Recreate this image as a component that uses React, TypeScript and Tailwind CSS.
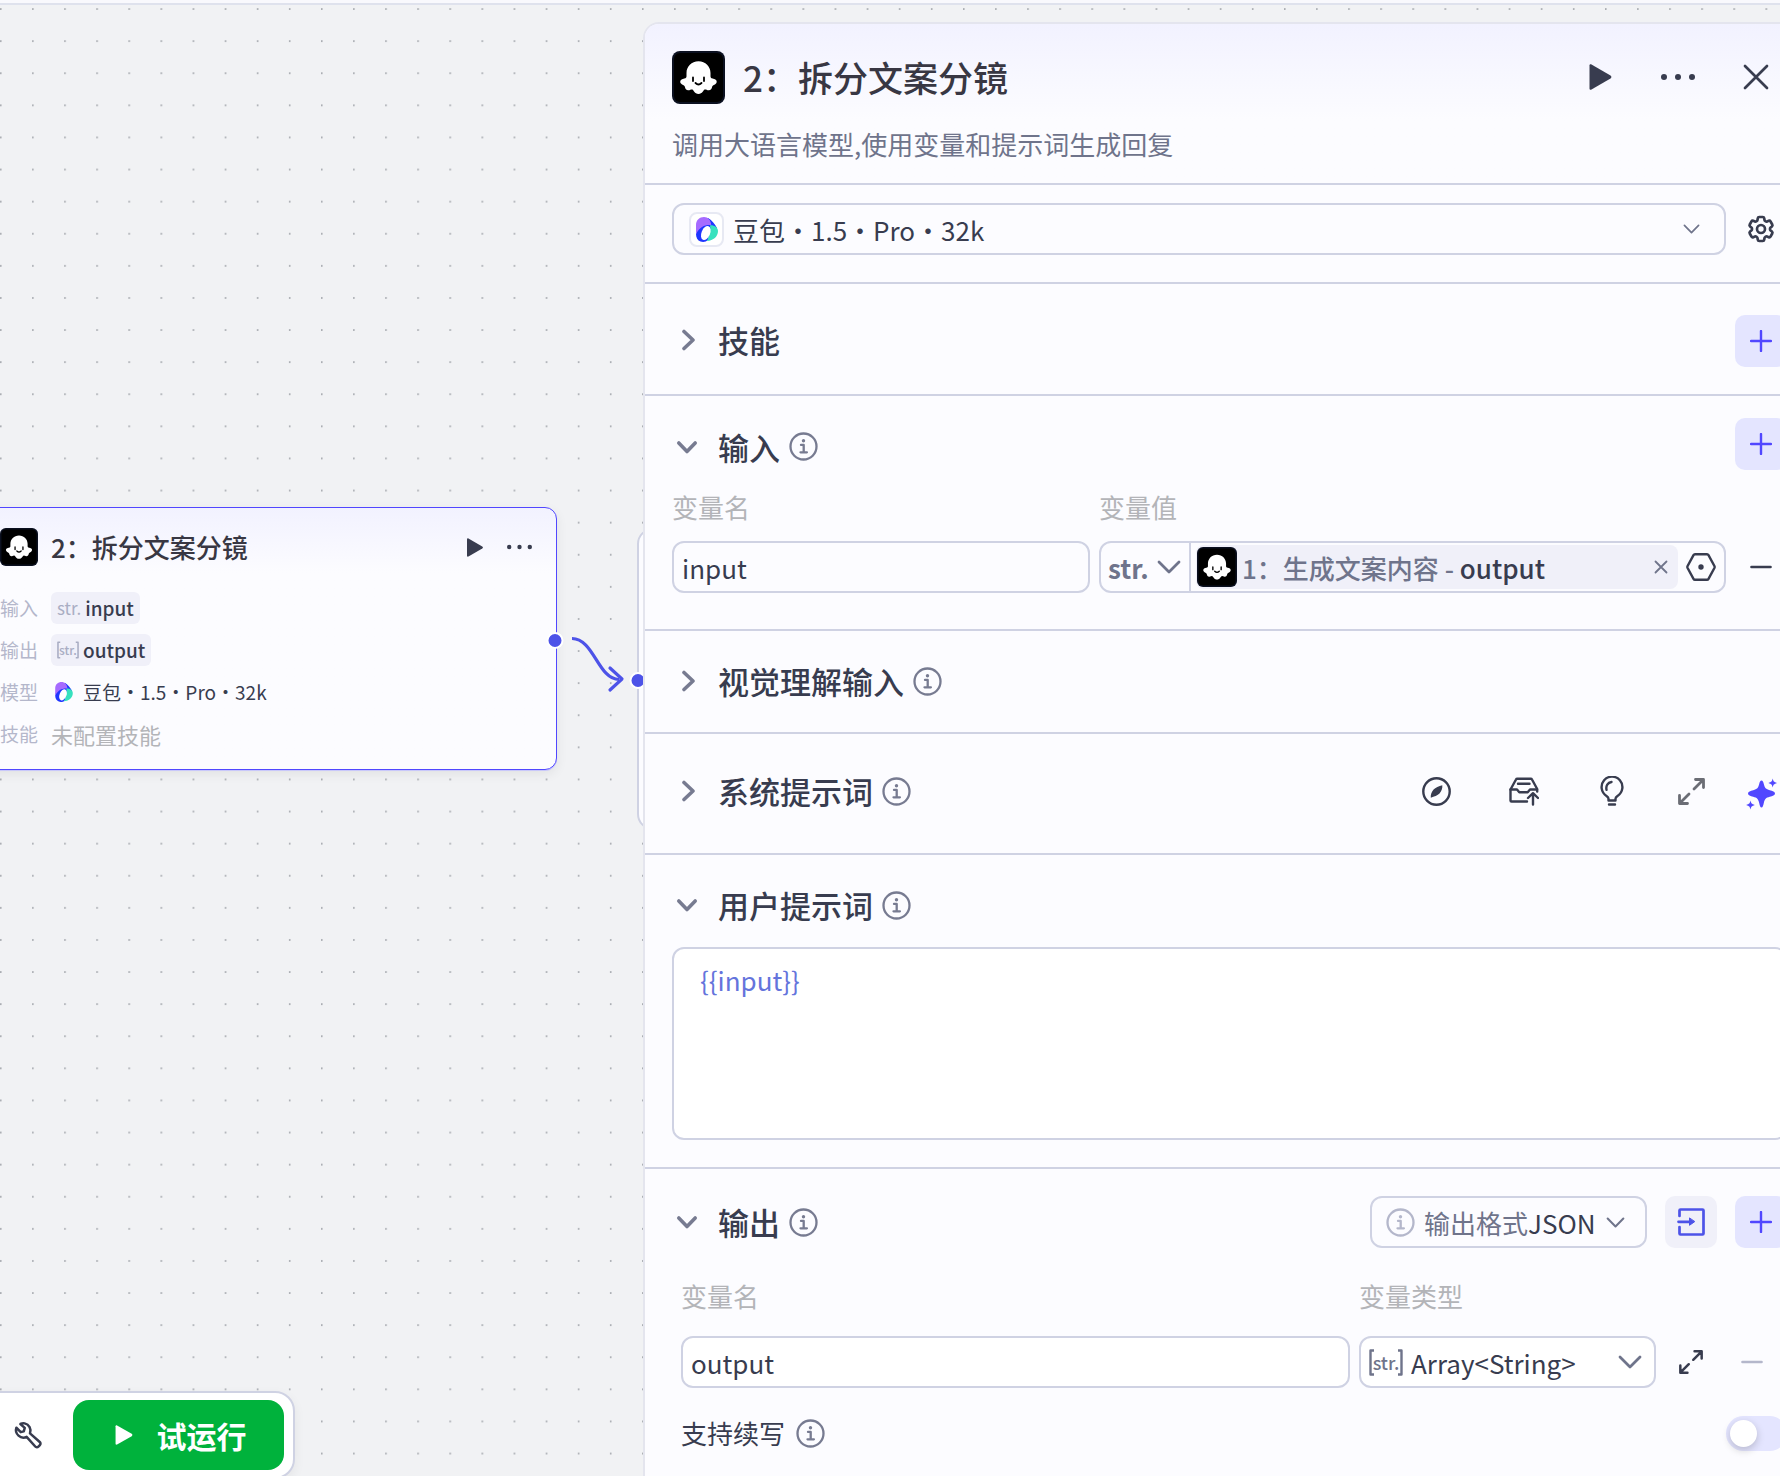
import { useState } from "react";
import type { ReactNode } from "react";
import { HiOutlineCog6Tooth } from "react-icons/hi2";
import { clsx } from "clsx";

type IconProps = { className?: string };

function GhostIcon({ className }: IconProps) {
  return (
    <svg viewBox="0 0 53 53" className={className} aria-hidden="true">
      <rect width="53" height="53" rx="8" fill="#0b1020" />
      <rect x="2" y="2" width="49" height="49" rx="6" fill="#000" />
      <path
        fill="#fff"
        d="M26.5 10.3c-7 0-12 5.2-12 11.7v3.6c0 1.8-1.6 2-3.6 2.3-2.6.4-3.3 3-1.9 4.7 1.2 1.5 3.4 1.7 3.9 3.2.3 2.3 1.5 3.7 3.7 3.5 1.5-.1 2.6-1.1 3.7-.7 1.6.6 2.2 4.4 6.200 4.400s4.600-3.800 6.200-4.400c1.100-.4 2.200.6 3.700.7 2.200.2 3.400-1.200 3.700-3.500.5-1.500 2.700-1.700 3.900-3.200 1.400-1.700.7-4.300-1.900-4.700-2-.3-3.600-.5-3.600-2.300V22c0-6.500-5-11.700-12-11.700z"
      />
      <path d="M21 26.5v3.500M32 26.5v3.500M23.500 32q3 3 6 0" fill="none" stroke="#000" strokeWidth="1.8" strokeLinecap="round" />
    </svg>
  );
}

function DoubaoIcon({ className }: IconProps) {
  return (
    <svg viewBox="0 0 22 25" className={className} aria-hidden="true">
      <path fill="#1f36ff" d="M12 1C15.500 3 19 7 21 11L14 14 12 23C10 25 7 25.500 4.500 24.500 1.500 23.500 0 20.500 0 17L2 9z" />
      <path fill="#a66bff" d="M0 17V8C0 3 3.500 0 8 0c4 0 6.800 3 7.300 8.200C9.500 7.500 4 9.500 0 17z" />
      <path fill="#37e1be" d="M14 8.300C18.500 8 22 10.500 22 14c0 5.500-4.500 9.500-11 10C13 20 15 14 14 8.300z" />
      <ellipse cx="9.800" cy="16" rx="4.300" ry="7.300" transform="rotate(22 9.800 16)" fill="#fff" />
    </svg>
  );
}

function PlayIcon({ className }: IconProps) {
  return (
    <svg viewBox="0 0 22 26" className={className} fill="currentColor" aria-hidden="true">
      <path d="M0 1.5C0 .4 1 0 2 .5l19 11c1.200.8 1.200 2.200 0 3l-19 11c-1 .5-2 .1-2-1z" />
    </svg>
  );
}

function MoreIcon({ className }: IconProps) {
  return (
    <svg viewBox="0 0 34 8" className={className} fill="currentColor" aria-hidden="true">
      <circle cx="3" cy="4" r="3" />
      <circle cx="17" cy="4" r="3" />
      <circle cx="31" cy="4" r="3" />
    </svg>
  );
}

function InfoIcon({ className }: IconProps) {
  return (
    <svg viewBox="0 0 29 29" className={clsx("size-[29px] shrink-0", className)} fill="none" stroke="currentColor" strokeWidth="2.3" aria-hidden="true">
      <circle cx="14.5" cy="14.5" r="13" />
      <circle cx="14.5" cy="8.7" r="1.7" fill="currentColor" stroke="none" />
      <path d="M12 12.900h2.700v7.300M11.500 20.300h6.400" strokeLinecap="round" strokeLinejoin="round" />
    </svg>
  );
}

function ChevronIcon({ className, strokeWidth = 2 }: IconProps & { strokeWidth?: number }) {
  return (
    <svg viewBox="0 0 24 14" className={clsx("pointer-events-none shrink-0", className)} fill="none" stroke="currentColor" strokeWidth={strokeWidth} strokeLinecap="round" strokeLinejoin="round" aria-hidden="true">
      <path d="M2 2l10 10L22 2" />
    </svg>
  );
}

// thicker chevron used by the section headers
function ToggleIcon({ open }: { open: boolean }) {
  return (
    <svg viewBox="0 0 22 22" className="size-[22px]" fill="none" stroke="currentColor" strokeWidth="3.600" strokeLinecap="round" strokeLinejoin="round" aria-hidden="true">
      {open ? <path d="M2.800 7l8.200 8.500L19.200 7" /> : <path d="M8 2.500l9 8.500-9 8.500" />}
    </svg>
  );
}

function ExpandIcon({ className }: IconProps) {
  return (
    <svg viewBox="0 0 27 27" className={className} fill="none" stroke="currentColor" strokeWidth="2.8" strokeLinecap="round" strokeLinejoin="round" aria-hidden="true">
      <path d="M17.500 1.500h8v8M25 2l-9 9M1.500 17.500v8h8M2 25l9-9" />
    </svg>
  );
}

function PlusIcon() {
  return (
    <svg viewBox="0 0 22 22" className="size-[22px]" stroke="currentColor" strokeWidth="2.4" strokeLinecap="round" aria-hidden="true">
      <path d="M11 1v20M1 11h20" />
    </svg>
  );
}

function MinusIcon() {
  return (
    <svg viewBox="0 0 22 4" className="h-1 w-[22px]" stroke="currentColor" strokeWidth="2.6" strokeLinecap="round" aria-hidden="true">
      <path d="M1.500 2h19" />
    </svg>
  );
}

function CompassIcon() {
  return (
    <svg viewBox="0 0 29 29" className="size-[29px]" aria-hidden="true">
      <circle cx="14.5" cy="14.5" r="13.200" fill="none" stroke="currentColor" strokeWidth="2.400" />
      <path fill="currentColor" d="M20.300 8.300c.4 2.600-1 6.500-2.800 8.200-1.800 1.800-5.300 3.200-8.700 4.200-.4-2.600 1-6.500 2.800-8.200 1.800-1.800 5.300-3.200 8.700-4.200z" />
    </svg>
  );
}

function InboxUpIcon() {
  return (
    <svg viewBox="0 0 30 29" className="h-[29px] w-[30px]" fill="none" stroke="currentColor" strokeWidth="2.400" strokeLinecap="round" strokeLinejoin="round" aria-hidden="true">
      <path d="M18 24.500H2.500a1 1 0 0 1-1-1V12.500L7 2.500Q7.400 1.700 8.300 1.700h13.400q.9 0 1.300.8l5.200 9.500v2.500" />
      <path d="M9 6.800h11.500M1.500 12.500H8l2.300 2.800h8.400l2.300-2.800h7M24 27.500V17M19 21l5-4.800 5 4.800" />
    </svg>
  );
}

function BulbIcon() {
  return (
    <svg viewBox="0 0 24 30" className="h-[30px] w-6" fill="none" stroke="currentColor" strokeWidth="2.400" strokeLinecap="round" strokeLinejoin="round" aria-hidden="true">
      <path d="M8.500 24.500h7v-1.800c0-1.300.7-1.900 2-2.800a10.400 10.400 0 1 0-11 0c1.300.9 2 1.500 2 2.800zM9 28.500h6M6.500 13.800c-.8-4 1.200-7.300 5-7.800" />
    </svg>
  );
}

function SparklesIcon() {
  return (
    <svg viewBox="-2 -6 34 38" className="h-[38px] w-[34px]" fill="currentColor" aria-hidden="true">
      <path d="M15.500 2.500c1.200 0 1.800 1.300 2.300 3.500 1 4 2 5.200 6 6.200 2.700.7 5.200 1.400 5.200 3.300s-2.500 2.600-5.200 3.300c-4 1-5 2.200-6 6.200-.5 2.700-1.100 4.500-2.300 4.500s-1.800-1.800-2.300-4.500c-1-4-2-5.200-6-6.200-2.700-.7-5.200-1.400-5.200-3.300s2.500-2.600 5.200-3.300c4-1 5-2.200 6-6.200.5-2.200 1.100-3.500 2.300-3.500z" />
      <path d="M26.700.5c.8 3 1 3.300 4.300 4.500-3.300 1.200-3.500 1.500-4.300 4.500-.8-3-1-3.300-4.300-4.500 3.300-1.200 3.500-1.500 4.300-4.500zM4.500 22.500c.8 3 1 3.300 4.300 4.500-3.300 1.200-3.500 1.500-4.300 4.500-.8-3-1-3.300-4.300-4.500 3.300-1.200 3.500-1.500 4.300-4.500z" />
    </svg>
  );
}

function ImportIcon() {
  return (
    <svg viewBox="0 0 28 28" className="size-7" fill="none" stroke="currentColor" strokeWidth="2.700" strokeLinecap="round" strokeLinejoin="round" aria-hidden="true">
      <path d="M2.500 8V2.500a1 1 0 0 1 1-1h22a1 1 0 0 1 1 1v23a1 1 0 0 1-1 1h-22a1 1 0 0 1-1-1V19M1.500 13.800H15" />
      <path d="M12.500 10.300v7l5-3.500z" fill="currentColor" strokeWidth="1" />
    </svg>
  );
}

function WrenchIcon() {
  return (
    <svg viewBox="0 0 24 24" className="size-[30px]" fill="none" stroke="currentColor" strokeWidth="2" strokeLinecap="round" strokeLinejoin="round" aria-hidden="true">
      <path d="M9.300 2.700a6 6 0 0 1 4.300 8l7.800 6.900a1.700 1.700 0 0 1 .1 2.500l-1.200 1.200a1.700 1.700 0 0 1-2.500-.1l-6.900-7.700A6 6 0 0 1 2.700 6.200l3.500 3.500 2.400-.6.8-2.800-3.500-3.100a6 6 0 0 1 3.400-.5z" />
    </svg>
  );
}

function VariableIcon() {
  return (
    <svg viewBox="0 0 30 28" className="h-7 w-[30px]" fill="none" stroke="currentColor" strokeWidth="2.400" strokeLinejoin="round" aria-hidden="true">
      <path d="M9 1.200h12q1 0 1.500.9l5.900 10.900q.5 1 0 2l-5.900 10.900q-.5.9-1.500.9H9q-1 0-1.500-.9L1.600 15q-.5-1 0-2L7.500 2.100q.5-.9 1.500-.9z" />
      <circle cx="15" cy="14" r="2.700" fill="currentColor" stroke="none" />
    </svg>
  );
}

// "str." wrapped in tall brackets, marks an array type
function ArrayTypeMark({ className }: IconProps) {
  return (
    <span className={clsx("relative flex shrink-0 items-center justify-center font-medium", className)}>
      str.
      <svg viewBox="0 0 34 27" className="absolute inset-0 size-full" fill="none" stroke="currentColor" strokeWidth="2.400" strokeLinejoin="round" aria-hidden="true">
        <path d="M5 1.500H1.500v24H5M29 1.500h3.500v24H29" />
      </svg>
    </span>
  );
}

type IconButtonProps = {
  label: string;
  className?: string;
  children: ReactNode;
};

function IconButton({ label, className, children }: IconButtonProps) {
  return (
    <button type="button" aria-label={label} className={clsx("flex h-[52px] shrink-0 items-center justify-center rounded-[10px]", className)}>
      {children}
    </button>
  );
}

function AddButton({ label }: { label: string }) {
  return (
    <IconButton label={label} className="w-[52px] self-start bg-[#e4e5ff] text-[#5147ff]">
      <PlusIcon />
    </IconButton>
  );
}

type SectionProps = {
  title: string;
  className: string;
  headerClassName?: string;
  defaultOpen?: boolean;
  info?: boolean;
  actions?: ReactNode;
  children?: ReactNode;
};

function Section({ title, className, headerClassName = "h-[52px]", defaultOpen = false, info = true, actions, children }: SectionProps) {
  const [open, setOpen] = useState(defaultOpen);

  return (
    <section className={clsx("border-b-2 border-[#cfd2e3] px-[27px]", className)}>
      <div className={clsx("flex items-center justify-between", headerClassName)}>
        <div className="flex items-center gap-[9px]">
          <button type="button" aria-expanded={open} onClick={() => setOpen(!open)} className="flex items-center">
            <span className="flex w-[46px] items-center pl-1 text-[#777b91]">
              <ToggleIcon open={open} />
            </span>
            <span className="text-[31px] leading-10 font-medium text-[#383c4f]">{title}</span>
          </button>
          {info && <InfoIcon className="text-[#777b91]" />}
        </div>
        {actions}
      </div>
      {open && children}
    </section>
  );
}

const fieldClass = "h-[52px] min-w-0 rounded-xl border-2 border-[#cfd2e3] text-[26px] text-[#383c4f] outline-none";

function NodeRow({ label, children }: { label: string; children: ReactNode }) {
  return (
    <div className="flex h-8 items-center gap-[13px]">
      <dt className="w-[38px] text-[19px] text-[#b4b7cb]">{label}</dt>
      <dd className="flex items-center">{children}</dd>
    </div>
  );
}

function Chip({ type, name }: { type: ReactNode; name: string }) {
  return (
    <span className="flex h-8 items-center gap-1 rounded-md bg-[#f0f0f9] px-[6px]">
      <span className="text-[17px] text-[#a9adc3]">{type}</span>
      <span className="text-[19px] font-medium text-[#383c4f]">{name}</span>
    </span>
  );
}

function WorkflowNode() {
  return (
    <article className="absolute top-[502px] -left-5 flex h-[263px] w-[577px] flex-col rounded-xl border border-[#5147ff] bg-[#fcfcff] bg-gradient-to-b from-[#f2f2ff] to-[#fcfcff] to-25% pt-5 pr-6 pl-[19px] shadow-[0_1px_0_#c9c8fa,0_4px_12px_rgba(0,0,0,0.07)]">
      <header className="flex items-center text-[#383c4f]">
        <GhostIcon className="size-[38px]" />
        <h2 className="ml-[13px] flex-1 text-[26px] leading-[38px] font-medium text-[#383743]">2：拆分文案分镜</h2>
        <button type="button" aria-label="运行节点">
          <PlayIcon className="h-[19px] w-4" />
        </button>
        <button type="button" aria-label="更多操作" className="ml-6">
          <MoreIcon className="h-[6px] w-[25px]" />
        </button>
      </header>
      <dl className="mt-[26px] flex flex-col gap-[10px]">
        <NodeRow label="输入">
          <Chip type="str." name="input" />
        </NodeRow>
        <NodeRow label="输出">
          <Chip type={<ArrayTypeMark className="h-[18px] w-[22px] text-[12px]" />} name="output" />
        </NodeRow>
        <NodeRow label="模型">
          <DoubaoIcon className="mx-1 h-5 w-[18px]" />
          <span className="ml-[6px] text-[19px] text-[#383c4f]">豆包・1.5・Pro・32k</span>
        </NodeRow>
        <NodeRow label="技能">
          <span className="text-[22px] text-[#b3b4b8]">未配置技能</span>
        </NodeRow>
      </dl>
    </article>
  );
}

function Canvas() {
  return (
    <div className="absolute inset-0 overflow-hidden">
      <svg className="absolute inset-0 size-full" aria-hidden="true">
        <defs>
          <pattern id="dots" width="20" height="20" patternUnits="userSpaceOnUse" patternTransform="translate(0 -12.500) scale(1.605)">
            <circle cx="0.500" cy="10.300" r="0.600" fill="#a6a9af" />
          </pattern>
        </defs>
        <rect width="100%" height="100%" fill="url(#dots)" />
      </svg>
      <WorkflowNode />
      <article className="absolute top-[523px] left-[637px] h-[302px] w-[400px] rounded-2xl border-2 border-[#cfd2e3] bg-[#fcfcff]" />
      <svg className="absolute top-[615px] left-[540px] h-[90px] w-[110px]" fill="none" aria-hidden="true">
        <path d="M32 18.500c22 0 26 41 47 41" stroke="#4d53e8" strokeWidth="3.200" />
        <path d="M70 48l12 11-12 11" stroke="#4d53e8" strokeWidth="3.200" strokeLinecap="round" strokeLinejoin="round" />
        <circle cx="15" cy="20.500" r="7.500" fill="#4d53e8" stroke="#fff" strokeWidth="2" />
        <circle cx="98" cy="60.500" r="7.500" fill="#4d53e8" stroke="#fff" strokeWidth="2" />
      </svg>
      <div className="absolute -bottom-[3px] -left-5 flex items-center rounded-[20px] border-2 border-[#cfd2e3] bg-white py-[7px] pr-[9px] pl-[31px] shadow-[0_4px_12px_rgba(0,0,0,0.06)]">
        <button type="button" aria-label="调试工具" className="text-[#383c4f]">
          <WrenchIcon />
        </button>
        <button type="button" className="ml-[30px] flex h-[70px] w-[211px] items-center justify-center gap-6 rounded-2xl bg-[#00b23c] pl-1 text-white">
          <PlayIcon className="h-5 w-[18px]" />
          <span className="text-[30px] font-bold">试运行</span>
        </button>
      </div>
    </div>
  );
}

function ModelSection() {
  return (
    <div className="flex gap-[9px] border-b-2 border-[#cfd2e3] px-[27px] pt-[18px] pb-[27px]">
      <div className={clsx(fieldClass, "flex flex-1 items-center pr-6 pl-[15px]")}>
        <span className="flex size-[35px] shrink-0 items-center justify-center rounded-lg border-2 border-[#e7e9f3] bg-white">
          <DoubaoIcon className="h-[25px] w-[22px]" />
        </span>
        <select aria-label="模型" className="ml-[9px] min-w-0 flex-1 appearance-none bg-transparent outline-none">
          <option>豆包・1.5・Pro・32k</option>
        </select>
        <ChevronIcon className="h-[10px] w-[17px] text-[#6f748b]" strokeWidth={2.4} />
      </div>
      <IconButton label="模型设置" className="w-[52px] text-[#383c4f]">
        <HiOutlineCog6Tooth className="size-8" strokeWidth={2} />
      </IconButton>
    </div>
  );
}

function InputSection() {
  return (
    <Section title="输入" defaultOpen className="pt-[22px] pb-9" headerClassName="h-[57px]" actions={<AddButton label="新增输入" />}>
      <div className="mt-3 grid grid-cols-[2fr_3fr_52px] gap-x-[9px] gap-y-[14px]">
        <label htmlFor="input-name" className="text-[26px] leading-10 text-[#b3b4b8]">变量名</label>
        <span className="col-span-2 text-[26px] leading-10 text-[#b3b4b8]">变量值</span>
        <input id="input-name" defaultValue="input" className={clsx(fieldClass, "px-2")} />
        <div className={clsx(fieldClass, "flex items-center")}>
          <div className="flex h-full w-[90px] shrink-0 items-center justify-between border-r-2 border-[#cfd2e3] pr-2 pl-[7px] text-[#6f748b]">
            <select aria-label="变量值类型" className="w-[42px] appearance-none bg-transparent font-bold outline-none">
              <option>str.</option>
            </select>
            <ChevronIcon className="h-[14px] w-6" strokeWidth={2.8} />
          </div>
          <div className="ml-[5px] flex h-11 min-w-0 flex-1 items-center rounded-lg bg-[#f0f0f9] pr-[10px] pl-px">
            <GhostIcon className="size-10 shrink-0" />
            <span className="ml-[5px] flex-1 truncate font-medium">
              <span className="text-[#6f748b]">1：生成文案内容 - </span>output
            </span>
            <button type="button" aria-label="清除引用" className="text-[#6f748b]">
              <svg viewBox="0 0 14 14" className="size-[14px]" stroke="currentColor" strokeWidth="1.800" strokeLinecap="round" aria-hidden="true">
                <path d="M1.500 1.500l11 11M12.500 1.500l-11 11" />
              </svg>
            </button>
          </div>
          <button type="button" aria-label="选择变量" className="mx-2">
            <VariableIcon />
          </button>
        </div>
        <IconButton label="删除输入" className="text-[#383c4f]">
          <MinusIcon />
        </IconButton>
      </div>
    </Section>
  );
}

function OutputSection() {
  return (
    <Section
      title="输出"
      defaultOpen
      className="pt-[27px]"
      actions={
        <div className="flex gap-[18px]">
          <div className={clsx(fieldClass, "flex w-[277px] items-center pr-5 pl-[14px]")}>
            <InfoIcon className="text-[#b4b7cb]" />
            <label htmlFor="format" className="ml-[9px] shrink-0 text-[#6f748b]">输出格式</label>
            <select id="format" className="min-w-0 flex-1 appearance-none bg-transparent outline-none">
              <option>JSON</option>
            </select>
            <ChevronIcon className="h-[11px] w-[19px] text-[#6f748b]" strokeWidth={2.6} />
          </div>
          <IconButton label="导入" className="w-[52px] bg-[#f0f0f9] text-[#4d53e8]">
            <ImportIcon />
          </IconButton>
          <AddButton label="新增输出" />
        </div>
      }
    >
      <div className="mt-7 grid grid-cols-[1fr_297px_52px_52px] gap-x-[9px] gap-y-5 px-[9px]">
        <label htmlFor="output-name" className="text-[26px] leading-10 text-[#b3b4b8]">变量名</label>
        <label htmlFor="output-type" className="col-span-3 text-[26px] leading-10 text-[#b3b4b8]">变量类型</label>
        <input id="output-name" defaultValue="output" className={clsx(fieldClass, "bg-white px-2")} />
        <div className={clsx(fieldClass, "flex items-center bg-white pr-3 pl-2")}>
          <ArrayTypeMark className="h-[27px] w-[34px] text-[18px] text-[#6f748b]" />
          <select id="output-type" className="ml-2 min-w-0 flex-1 appearance-none bg-transparent outline-none">
            <option>Array&lt;String&gt;</option>
          </select>
          <ChevronIcon className="h-[14px] w-6 text-[#6f748b]" strokeWidth={2.8} />
        </div>
        <IconButton label="展开输出" className="text-[#383c4f]">
          <ExpandIcon className="size-6" />
        </IconButton>
        <IconButton label="删除输出" className="text-[#b4b7cb]">
          <MinusIcon />
        </IconButton>
      </div>
      <div className="mt-[27px] flex items-center pb-10 pl-[9px]">
        <label htmlFor="resume" className="text-[26px] leading-9 text-[#383c4f]">支持续写</label>
        <InfoIcon className="ml-[11px] text-[#777b91]" />
        <input
          id="resume"
          type="checkbox"
          role="switch"
          className="ml-auto h-[35px] w-[61px] appearance-none rounded-full bg-[#e4e5ff] p-1 before:block before:size-[27px] before:rounded-full before:bg-white before:shadow-[0_3px_8px_rgba(0,0,0,0.2)] checked:bg-[#5147ff] checked:pl-[30px]"
        />
      </div>
    </Section>
  );
}

function NodePanel() {
  return (
    <aside className="relative mt-[17px] -mr-9 ml-[643px] flex-1 overflow-hidden rounded-t-2xl border-2 border-b-0 border-[#e4e5ee] bg-[#fcfcff]">
      <header className="border-b-2 border-[#cfd2e3] bg-gradient-to-b from-[#f2f2ff] to-[#fcfcff] to-60% px-[27px] pt-[27px] pb-[21px]">
        <div className="flex items-start text-[#383c4f]">
          <GhostIcon className="size-[53px]" />
          <h1 className="ml-[18px] flex-1 text-[35px] leading-[51px] font-medium text-[#383743]">2：拆分文案分镜</h1>
          <div className="flex h-[51px] items-center pr-[18px]">
            <button type="button" aria-label="运行">
              <PlayIcon className="h-[26px] w-[23px]" />
            </button>
            <button type="button" aria-label="更多" className="ml-[49px]">
              <MoreIcon className="h-2 w-[34px]" />
            </button>
            <button type="button" aria-label="关闭" className="ml-12">
              <svg viewBox="0 0 26 26" className="size-[26px]" stroke="currentColor" strokeWidth="2.700" strokeLinecap="round" aria-hidden="true">
                <path d="M2 2l22 22M24 2L2 24" />
              </svg>
            </button>
          </div>
        </div>
        <p className="mt-[22px] text-[26px] leading-9 text-[#6f748b]">调用大语言模型,使用变量和提示词生成回复</p>
      </header>

      <ModelSection />
      <Section title="技能" info={false} className="pt-[31px] pb-[30px]" headerClassName="h-[49px]" actions={<AddButton label="新增技能" />} />
      <InputSection />
      <Section title="视觉理解输入" className="pt-6 pb-[25px]" />
      <Section
        title="系统提示词"
        className="pt-[31px] pb-9"
        actions={
          <div className="flex gap-[18px] text-[#383c4f]">
            <IconButton label="提示词库" className="w-[70px]">
              <CompassIcon />
            </IconButton>
            <IconButton label="提交到提示词库" className="w-[70px]">
              <InboxUpIcon />
            </IconButton>
            <IconButton label="提示词示例" className="w-[70px]">
              <BulbIcon />
            </IconButton>
            <IconButton label="放大编辑" className="w-[52px] text-[#6b6d75]">
              <ExpandIcon className="size-[27px]" />
            </IconButton>
            <IconButton label="自动优化" className="w-[52px] text-[#5147ff]">
              <SparklesIcon />
            </IconButton>
          </div>
        }
      />
      <Section title="用户提示词" defaultOpen className="pt-6 pb-[27px]">
        <textarea
          aria-label="用户提示词"
          defaultValue="{{input}}"
          className="mt-4 block h-[193px] w-full resize-none rounded-xl border-2 border-[#cfd2e3] bg-white px-[26px] py-[13px] text-[26px] leading-9 text-[#6474dc] outline-none"
        />
      </Section>
      <OutputSection />
    </aside>
  );
}

export default function App() {
  return (
    <div className="flex h-screen flex-col overflow-hidden bg-[#f1f2f4] font-['Noto_Sans_CJK_SC',sans-serif]">
      <div className="h-[5px] shrink-0 border-b-2 border-[#dfe2ed] bg-[#f9f9fd]" />
      <main className="relative flex min-h-0 flex-1">
        <Canvas />
        <NodePanel />
      </main>
    </div>
  );
}
